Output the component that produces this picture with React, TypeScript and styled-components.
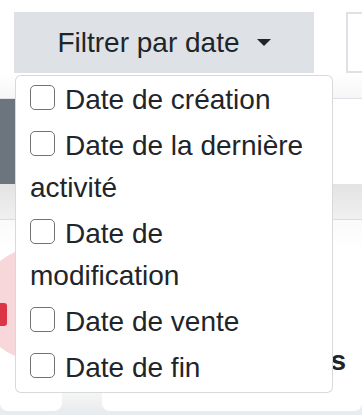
import styled, { createGlobalStyle } from "styled-components";
import { useState } from "react";

const GlobalStyle = createGlobalStyle`
  body {
    margin: 0;
    background: #fff;
    color: #212529;
    font-family: "Liberation Sans", Arial, sans-serif;
    overflow: hidden;
  }
`;

// top toolbar
const Toolbar = styled.div`
  display: flex;
  gap: 32px;
  padding: 12px 0 0 14px;
  height: 61px;
`;

const DropdownWrap = styled.div`
  position: relative;
  width: 300px;
  z-index: 10;
`;

const Toggle = styled.button`
  width: 100%;
  height: 61px;
  border: 0;
  border-radius: 0;
  background: #dee2e6;
  color: #212529;
  font-family: inherit;
  font-size: 28px;
  display: flex;
  align-items: center;
  justify-content: center;
  padding: 0;
`;

const Caret = styled.span`
  margin-left: 17px;
  width: 0;
  height: 0;
  border-top: 7px solid #212529;
  border-left: 7px solid transparent;
  border-right: 7px solid transparent;
`;

const SearchBox = styled.div`
  flex: 1;
  border: 2px solid #dee2e6;
  border-right: 0;
`;

// dropdown
const Menu = styled.div`
  position: absolute;
  top: calc(100% + 2px);
  left: 1px;
  width: 318px;
  box-sizing: border-box;
  background: #fff;
  border: 1px solid rgba(0, 0, 0, 0.15);
  border-radius: 6px;
  padding: 3px 0;
`;

const Item = styled.label`
  display: block;
  padding: 0 14px;
  font-size: 28px;
  line-height: 42px;
  margin-bottom: 4px;

  &:last-child {
    margin-bottom: 0;
  }
`;

const Check = styled.input`
  appearance: none;
  width: 25px;
  height: 25px;
  margin: 0 10px 0 0;
  box-sizing: border-box;
  border: 1.5px solid #737373;
  border-radius: 5px;
  vertical-align: -1px;
  background: #fff;

  &:checked {
    background: #0d6efd;
    border-color: #0d6efd;
  }
`;

// page behind
const Shade = styled.div`
  height: 25px;
  background: linear-gradient(#fff, #f6f6f6);
  border-bottom: 1px solid #dee2e6;
`;

const ProfileRow = styled.div`
  display: flex;
  height: 85px;
`;

const Avatar = styled.div`
  width: 60px;
  background: #6c757d;
`;

const Band = styled.div`
  height: 35px;
  background: linear-gradient(#e3e3e3, #f0f0f0);
  border-bottom: 1px solid #dcdcdc;
`;

const Content = styled.div`
  height: 171px;
  display: flex;
  justify-content: space-between;
  align-items: flex-end;
  padding-bottom: 13px;
  box-sizing: border-box;
  background: linear-gradient(#fafafa, #fff 30px);
`;

const Circle = styled.div`
  align-self: flex-start;
  margin: 28px 0 0 -20px;
  width: 112px;
  height: 112px;
  border-radius: 50%;
  background: #f8d7da;
  box-sizing: border-box;
  padding: 55px 0 0 13px;
`;

const Mark = styled.div`
  width: 14px;
  height: 23px;
  border-radius: 3px;
  background: #dc3545;
`;

const Heading = styled.h3`
  margin: 0;
  padding-right: 16px;
  font-size: 28px;
  line-height: 34px;
  font-weight: 700;
`;

const Cards = styled.div`
  display: flex;
  height: 20px;
  gap: 40px;
  background: linear-gradient(#f6f6f6, #e9ecef);
  border-bottom: 4px solid #e9ecef;
`;

const Card = styled.div<{ $wide?: boolean }>`
  width: ${(p) => (p.$wide ? "auto" : "62px")};
  flex: ${(p) => (p.$wide ? 1 : "none")};
  background: #fff;
  border-radius: 0 0 8px 8px;
`;

const options = [
  "Date de création",
  "Date de la dernière activité",
  "Date de modification",
  "Date de vente",
  "Date de fin",
];

function App() {
  const [checked, setChecked] = useState<string[]>([]);

  const onToggle = (name: string) =>
    setChecked((list) =>
      list.includes(name) ? list.filter((n) => n !== name) : [...list, name]
    );

  return (
    <>
      <GlobalStyle />
      <Toolbar>
        <DropdownWrap>
          <Toggle>
            Filtrer par date
            <Caret />
          </Toggle>
          <Menu>
            {options.map((opt) => (
              <Item key={opt}>
                <Check
                  type="checkbox"
                  checked={checked.includes(opt)}
                  onChange={() => onToggle(opt)}
                />
                {opt}
              </Item>
            ))}
          </Menu>
        </DropdownWrap>
        <SearchBox />
      </Toolbar>
      <Shade />
      <ProfileRow>
        <Avatar />
      </ProfileRow>
      <Band />
      <Content>
        <Circle>
          <Mark />
        </Circle>
        <Heading>Ventes</Heading>
      </Content>
      <Cards>
        <Card />
        <Card $wide />
      </Cards>
    </>
  );
}

export default App;
